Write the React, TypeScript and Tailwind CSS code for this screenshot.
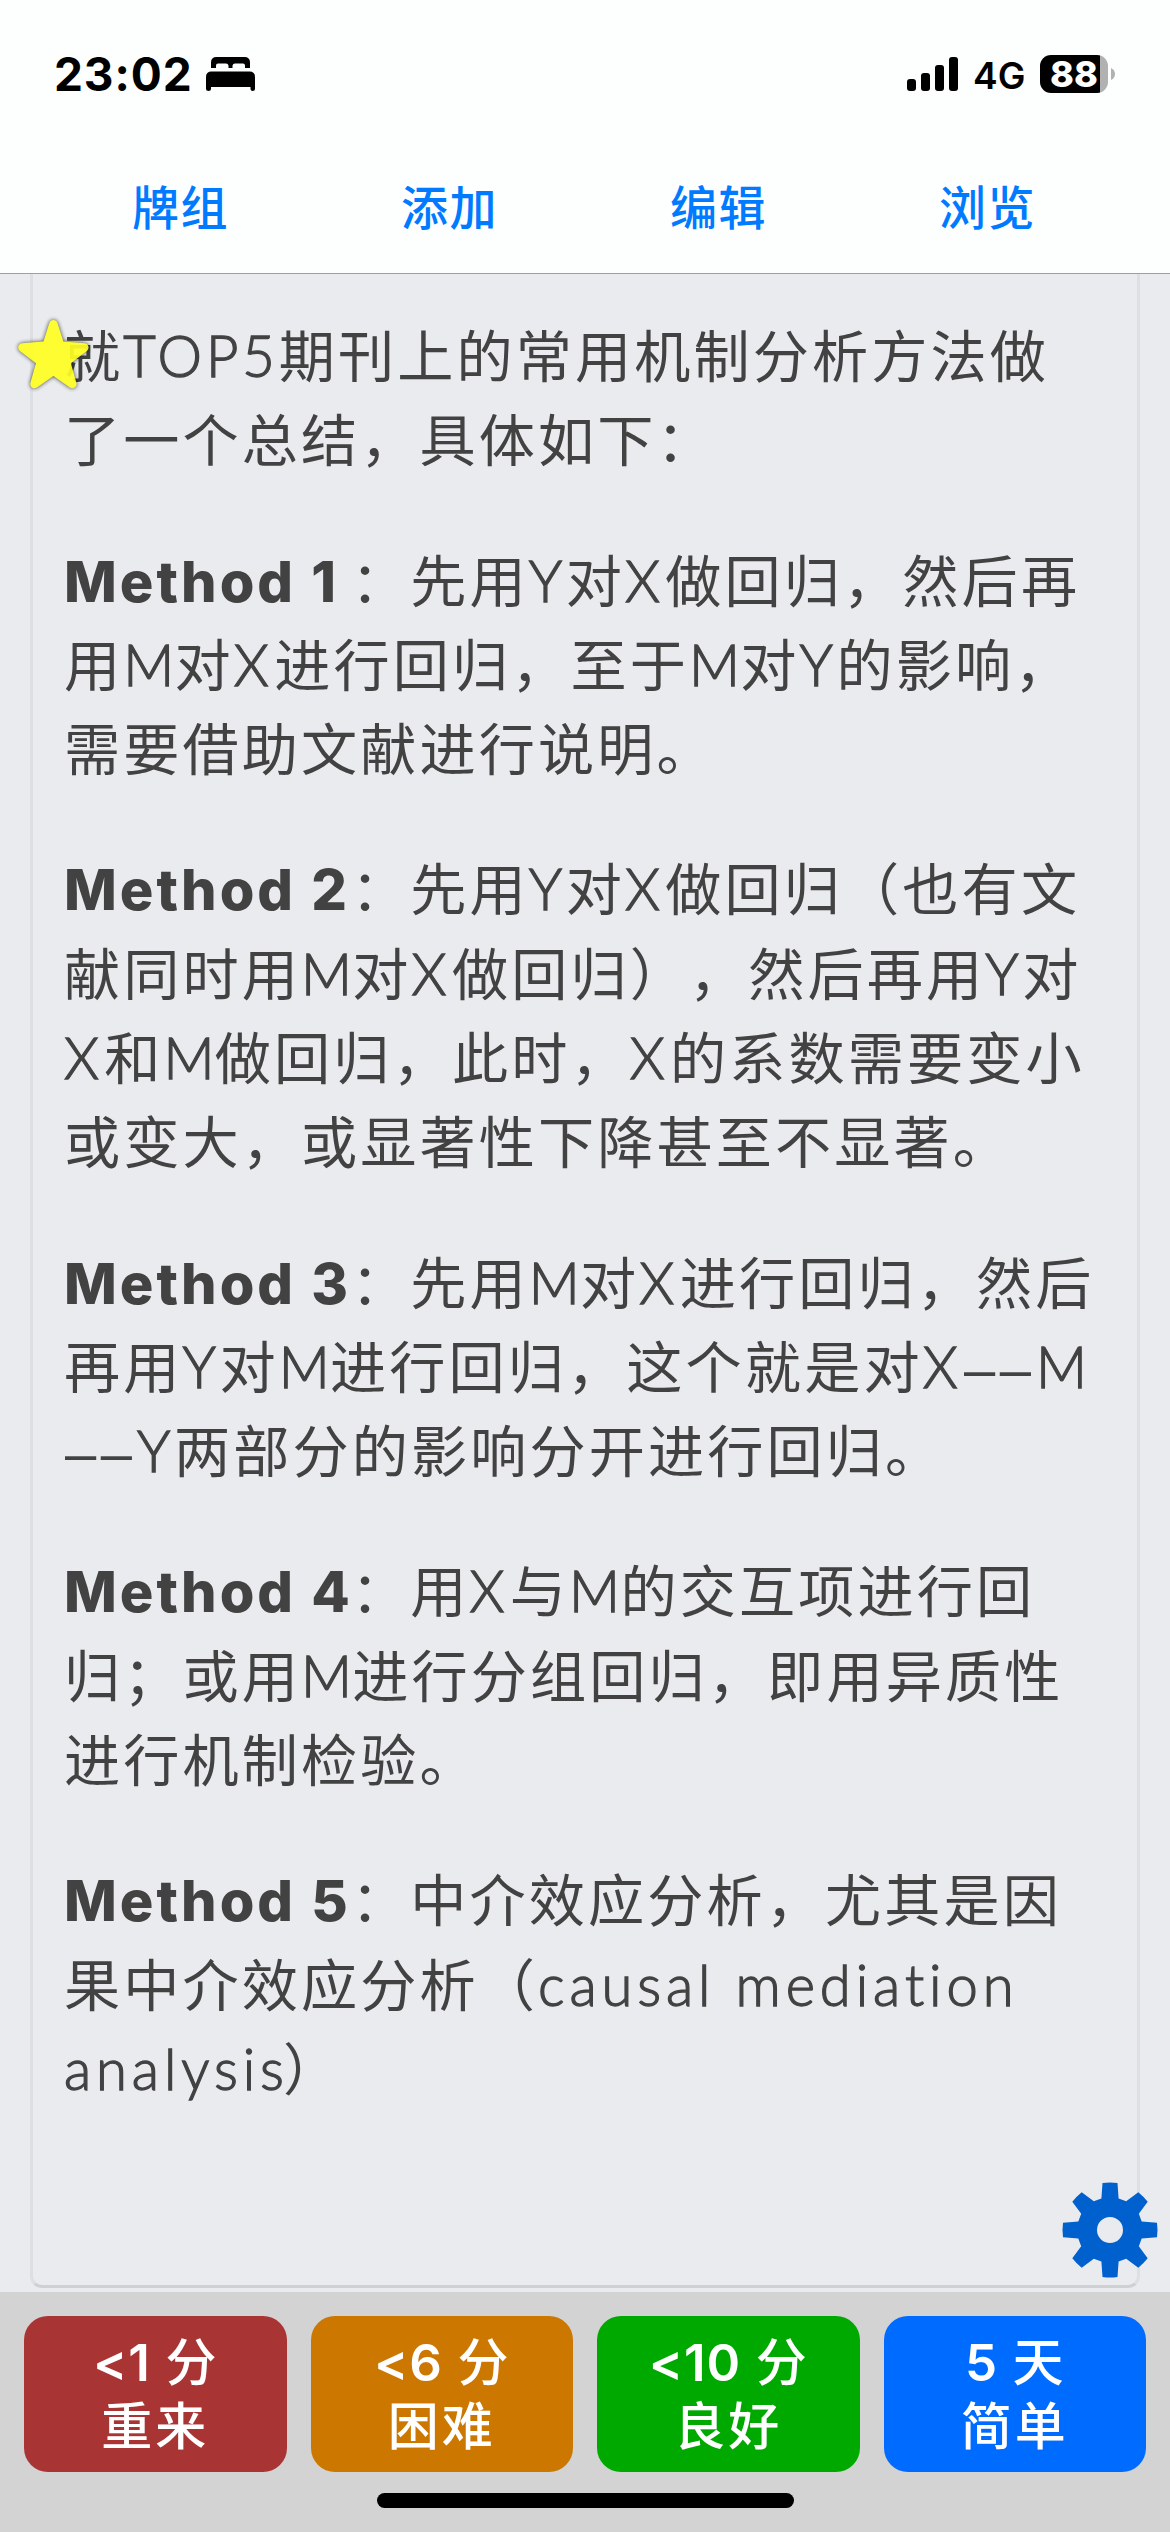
import React from "react";

type Seg = { cls: string; t: string };

const thin =
  "inline-block leading-none font-['Lato','Noto_Sans_CJK_SC',sans-serif] font-light [-webkit-text-stroke:1.3px_#424242]";

const c = (t: string): Seg => ({ cls: "tracking-[3.1px]", t });
const b = (t: string): Seg => ({
  cls: "inline-block w-[287px] leading-none font-['Inter',sans-serif] text-[56px] font-extrabold tracking-[3px]",
  t,
});
const X: Seg = { cls: `${thin} w-[40.3px]`, t: "X" };
const Y: Seg = { cls: `${thin} w-[37px]`, t: "Y" };
const M: Seg = { cls: `${thin} w-[51.3px]`, t: "M" };
const TOP5: Seg = { cls: `${thin} w-[155.5px] tracking-[4px]`, t: "TOP5" };
const dashes: Seg = {
  cls: "inline-block w-[73px] pl-[1px] leading-none font-['Liberation_Sans',sans-serif] tracking-[4.6px]",
  t: "––",
};
const causal: Seg = { cls: `${thin} w-[480px] tracking-[4.9px]`, t: "causal mediation" };
const analysis: Seg = { cls: `${thin} w-[219px] tracking-[4.9px]`, t: "analysis" };

const paragraphs: Seg[][][] = [
  [
    [c("就"), TOP5, c("期刊上的常用机制分析方法做")],
    [c("了一个总结，具体如下：")],
  ],
  [
    [b("Method 1"), c("：先用"), Y, c("对"), X, c("做回归，然后再")],
    [c("用"), M, c("对"), X, c("进行回归，至于"), M, c("对"), Y, c("的影响，")],
    [c("需要借助文献进行说明。")],
  ],
  [
    [b("Method 2"), c("：先用"), Y, c("对"), X, c("做回归（也有文")],
    [c("献同时用"), M, c("对"), X, c("做回归），然后再用"), Y, c("对")],
    [X, c("和"), M, c("做回归，此时，"), X, c("的系数需要变小")],
    [c("或变大，或显著性下降甚至不显著。")],
  ],
  [
    [b("Method 3"), c("：先用"), M, c("对"), X, c("进行回归，然后")],
    [c("再用"), Y, c("对"), M, c("进行回归，这个就是对"), X, dashes, M],
    [dashes, Y, c("两部分的影响分开进行回归。")],
  ],
  [
    [b("Method 4"), c("：用"), X, c("与"), M, c("的交互项进行回")],
    [c("归；或用"), M, c("进行分组回归，即用异质性")],
    [c("进行机制检验。")],
  ],
  [
    [b("Method 5"), c("：中介效应分析，尤其是因")],
    [c("果中介效应分析（"), causal],
    [analysis, c("）")],
  ],
];

const answers = [
  { amount: "<1", unit: "分", label: "重来", color: "bg-[#a93434]" },
  { amount: "<6", unit: "分", label: "困难", color: "bg-[#cb7700]" },
  { amount: "<10", unit: "分", label: "良好", color: "bg-[#00a900]" },
  { amount: "5", unit: "天", label: "简单", color: "bg-[#006bff]" },
];

function StatusBar() {
  return (
    <div className="flex h-[148px] items-center justify-between pl-[54px] pr-[55px] text-black">
      <div className="flex items-center">
        <span className="w-[152px] font-['Inter',sans-serif] text-[46px] leading-none font-bold tracking-[0.9px]">23:02</span>
        <svg className="h-[34px] w-[49px]" viewBox="0 0 49 34">
          <path d="M5 11V5.500Q5 0 10.500 0H38.500Q44 0 44 5.500V11H39V8.500Q39 6.500 37 6.500H29Q27 6.500 26.500 8.500V11H22.500V8.500Q22 6.500 20 6.500H12Q10 6.500 10 8.500V11Z" />
          <path d="M5.500 14.500H43.500Q49 14.500 49 20V32Q49 34 46.700 34Q44.500 34 44.500 32V30H5V32Q5 34 2.500 34Q0 34 0 32V20Q0 14.500 5.500 14.500Z" />
        </svg>
      </div>
      <div className="flex items-center">
        <div className="flex h-[34px] items-end gap-[5px]">
          <div className="h-3 w-[9px] rounded-[3px] bg-black" />
          <div className="h-[18px] w-[9px] rounded-[3px] bg-black" />
          <div className="h-[26px] w-[9px] rounded-[3px] bg-black" />
          <div className="h-[34px] w-[9px] rounded-[3px] bg-black" />
        </div>
        <span className="ml-[15px] w-[67px] pt-[3px] font-['Inter',sans-serif] text-[37px] leading-none font-semibold">4G</span>
        <div className="flex h-[38px] w-[68px] items-center justify-center rounded-[11px] bg-[linear-gradient(to_right,#000_60px,#b1b1b1_60px)]">
          <span className="font-['Inter',sans-serif] text-[36px] leading-none font-extrabold text-white">88</span>
        </div>
        <svg className="ml-[3px] h-[12px] w-[4px]" viewBox="0 0 4 12">
          <path d="M0 0Q4 2 4 6Q4 10 0 12Z" fill="#b1b1b1" />
        </svg>
      </div>
    </div>
  );
}

function Star() {
  return (
    <svg className="absolute top-[40px] left-[12px] h-[82px] w-[84px]" viewBox="12 314 84 82">
      <g opacity="0.92" className="[filter:drop-shadow(0_0_2px_#000c)]">
        <path
          d="M53.400 324.300L60.200 345.500L84.300 347.500L65.900 361.500L72.300 384L53.400 370.800L34.500 384L40.900 361.500L22.500 347.500L46.600 345.500Z"
          fill="#ffff22"
          stroke="#ffff22"
          strokeWidth="8.500"
          strokeLinejoin="round"
        />
      </g>
    </svg>
  );
}

function Gear() {
  return (
    <svg className="absolute right-[10px] bottom-[12px] h-[100px] w-[100px]" viewBox="-50 -50 100 100">
      <path
        fill="#0061ce"
        fillRule="evenodd"
        d="M-7.500 -47Q0 -48 7.500 -47L8.600 -31.500L16.200 -28.700L28.300 -37.700Q33.500 -33.500 37.700 -28.200L28.800 -16.300L31.700 -8.500L47 -7.200Q48 0 47 7.200L31.700 8.500L28.800 16.300L37.700 28.200Q33.500 33.500 28.300 37.700L16.200 28.700L8.600 31.500L7.500 47Q0 48 -7.500 47L-8.600 31.500L-16.200 28.700L-28.300 37.700Q-33.500 33.500 -37.700 28.200L-28.800 16.300L-31.700 8.500L-47 7.200Q-48 0 -47 -7.200L-31.700 -8.500L-28.800 -16.300L-37.700 -28.200Q-33.500 -33.500 -28.300 -37.700L-16.200 -28.700L-8.600 -31.500ZM-13 0A13 13 0 1 0 13 0A13 13 0 1 0 -13 0Z"
      />
    </svg>
  );
}

export default function App() {
  return (
    <div className="flex h-[2532px] w-[1170px] flex-col overflow-hidden bg-[#e9ebee] font-['Inter','Noto_Sans_CJK_SC',sans-serif]">
      <header className="h-[274px] shrink-0 border-b border-[#9fa0a1] bg-[#fdfffe]">
        <StatusBar />
        <nav className="grid h-[118px] grid-cols-4 items-center pr-[48px] pl-[46px] text-center text-[47px] leading-none font-medium tracking-[1.5px] text-[#007aff]">
          <span>牌组</span>
          <span>添加</span>
          <span>编辑</span>
          <span>浏览</span>
        </nav>
      </header>

      <main className="relative flex h-[2018px] shrink-0 flex-col">
        <article className="mx-[30px] h-[2014px] rounded-b-[12px] border-x-[3px] border-b-[3px] border-x-[#dedfe3] border-b-[#cfd0d4] pt-[37px] pl-[31px] font-['Noto_Sans_CJK_SC',sans-serif] text-[56.16px] leading-[84.24px] font-normal text-[#424242] [text-spacing-trim:space-all]">
          {paragraphs.map((lines, i) => (
            <p key={i} className="mb-[56.16px]">
              {lines.map((segs, j) => (
                <span key={j} className="block h-[84.24px] whitespace-nowrap">
                  {segs.map((s, k) => (
                    <span key={k} className={s.cls}>
                      {s.t}
                    </span>
                  ))}
                </span>
              ))}
            </p>
          ))}
        </article>
        <Star />
        <Gear />
      </main>

      <footer className="flex h-[240px] shrink-0 flex-col items-center bg-[#d3d3d3] pt-6">
        <div className="grid w-full grid-cols-4 gap-6 px-6">
          {answers.map((a) => (
            <button
              key={a.label}
              className={`flex h-[156px] flex-col items-center justify-center rounded-[24px] pt-[2px] text-[51px] leading-[64px] font-medium text-white ${a.color}`}
            >
              <span className="tracking-[1px]">
                <span className="font-semibold">{a.amount}</span> {a.unit}
              </span>
              <span className="tracking-[3px]">{a.label}</span>
            </button>
          ))}
        </div>
        <div className="mt-[21px] h-[15px] w-[417px] rounded-full bg-black" />
      </footer>
    </div>
  );
}
